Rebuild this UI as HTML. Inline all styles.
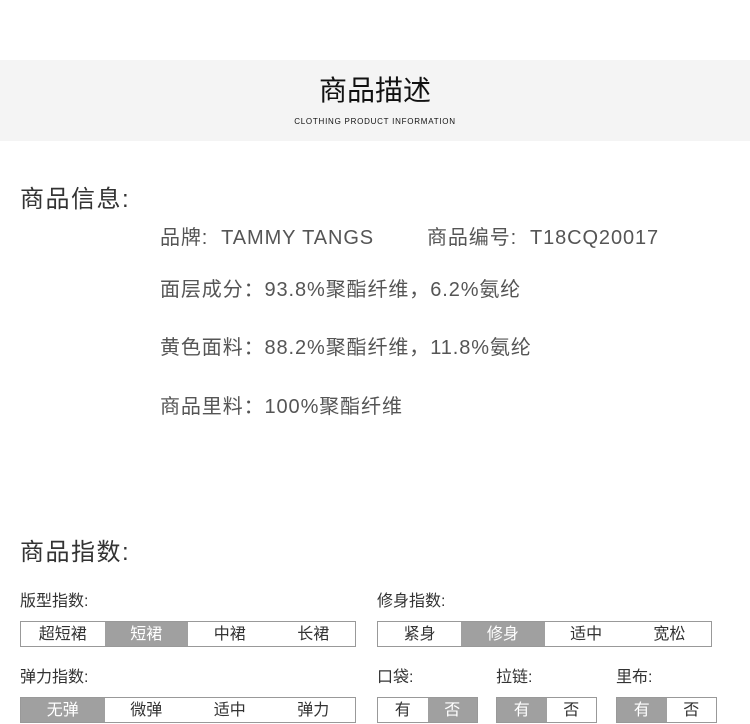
<!DOCTYPE html>
<html><head><meta charset="utf-8"><style>
*{margin:0;padding:0;box-sizing:border-box}
body{width:750px;height:724px;background:#fff;font-family:"Liberation Sans","Noto Sans CJK SC",sans-serif;position:relative;overflow:hidden;color:#333}
.band{position:absolute;left:0;top:60px;width:750px;height:81px;background:#f4f4f4}
.t{position:absolute;left:0;width:750px;text-align:center;color:#111}
.a{position:absolute;white-space:nowrap}
.h{font-size:24px;color:#333;left:20px;letter-spacing:1.5px}
.info{font-size:20px;color:#555;left:160px;letter-spacing:0.9px}
.lab{font-size:16px;color:#333}
.box{position:absolute;height:26px;border:1px solid #999;display:flex}
.box div{flex:1;text-align:center;font-size:16px;line-height:26px;color:#333}
.box .on{background:#a0a0a0;color:#fff}
</style></head><body>
<div class="band"></div>
<div class="t" style="top:74px;font-size:28px;line-height:34px">商品描述</div>
<div class="t" style="top:117px;font-size:8px;letter-spacing:0.75px;line-height:10px">CLOTHING PRODUCT INFORMATION</div>
<div class="a h" style="top:185px;line-height:30px">商品信息:</div>
<div class="a info" style="top:225px;line-height:26px">品牌:&nbsp;&nbsp;TAMMY TANGS</div>
<div class="a info" style="left:427px;top:225px;line-height:26px">商品编号:&nbsp;&nbsp;T18CQ20017</div>
<div class="a info" style="top:277px;line-height:26px">面层成分：93.8%聚酯纤维，6.2%氨纶</div>
<div class="a info" style="top:335px;line-height:26px">黄色面料：88.2%聚酯纤维，11.8%氨纶</div>
<div class="a info" style="top:394px;line-height:26px">商品里料：100%聚酯纤维</div>
<div class="a h" style="top:538px;line-height:30px">商品指数:</div>
<div class="a lab" style="left:20px;top:587px">版型指数:</div>
<div class="a lab" style="left:377px;top:587px">修身指数:</div>
<div class="box" style="left:20px;top:621px;width:336px"><div>超短裙</div><div class="on">短裙</div><div>中裙</div><div>长裙</div></div>
<div class="box" style="left:377px;top:621px;width:335px"><div>紧身</div><div class="on">修身</div><div>适中</div><div>宽松</div></div>
<div class="a lab" style="left:20px;top:663px">弹力指数:</div>
<div class="a lab" style="left:377px;top:663px">口袋:</div>
<div class="a lab" style="left:496px;top:663px">拉链:</div>
<div class="a lab" style="left:616px;top:663px">里布:</div>
<div class="box" style="left:20px;top:697px;width:336px"><div class="on">无弹</div><div>微弹</div><div>适中</div><div>弹力</div></div>
<div class="box" style="left:377px;top:697px;width:101px"><div>有</div><div class="on">否</div></div>
<div class="box" style="left:496px;top:697px;width:101px"><div class="on">有</div><div>否</div></div>
<div class="box" style="left:616px;top:697px;width:101px"><div class="on">有</div><div>否</div></div>
</body></html>
